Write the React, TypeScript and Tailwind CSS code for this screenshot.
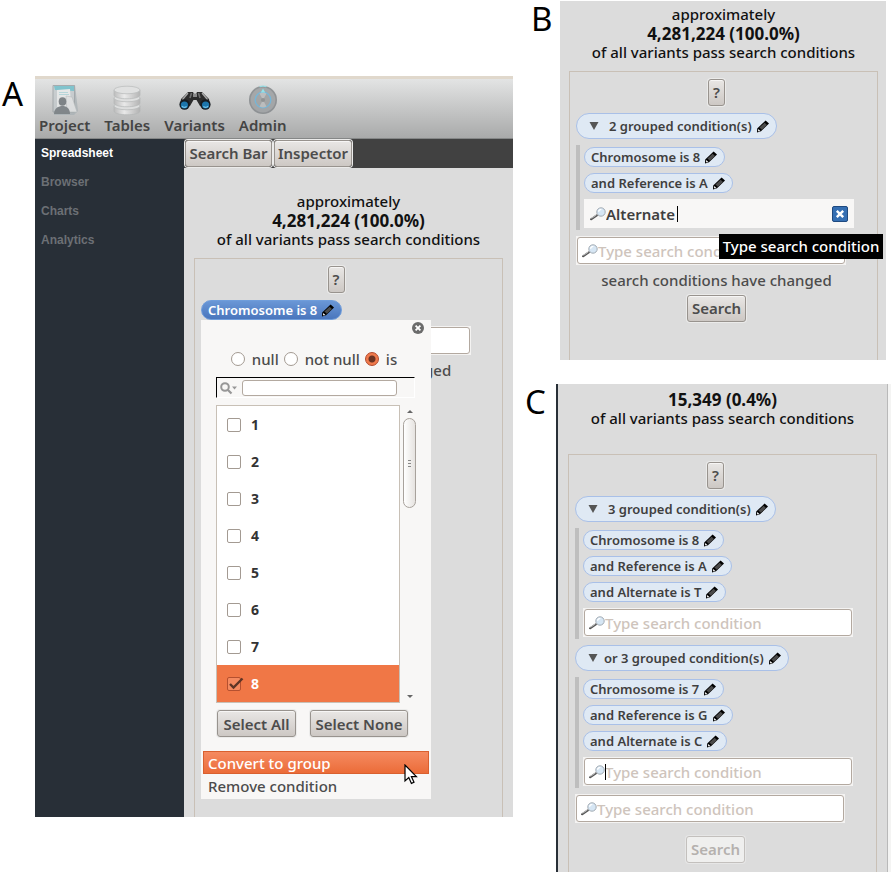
import { useId, type ReactNode } from "react";
import clsx from "clsx";

const SANS = "font-['Noto_Sans','Open_Sans',sans-serif]";

function Pencil() {
  return (
    <svg viewBox="0 0 14 13" className="h-[13px] w-[14px] shrink-0" aria-hidden="true">
      <path d="M9.6 0.6 L13 3.6 L5 11.2 L1 12.6 L1.2 8.4 Z" fill="#000" />
      <path d="M8.6 2.8 L11 5 L5.8 9.8 L3.4 7.6 Z" fill="#4a4a4a" />
      <path d="M2.2 9 L4.4 11 L2.6 11.4 L2 10.8 Z" fill="#f2f2f2" />
    </svg>
  );
}

function Magnifier() {
  return (
    <svg viewBox="0 0 16 14" className="h-[14px] w-[16px] shrink-0" aria-hidden="true">
      <path d="M1 12.3 L6.8 8.4" stroke="#555" strokeWidth="2" strokeLinecap="round" />
      <path d="M1.4 11.4 L6.4 8" stroke="#c9c9c9" strokeWidth="0.9" />
      <circle cx="11" cy="5" r="4.2" fill="#d6e6f4" stroke="#a3abb3" strokeWidth="1" />
      <path d="M8.6 4.8 A2.6 2.6 0 0 1 11.4 2.4" stroke="#fff" strokeWidth="1.4" fill="none" />
    </svg>
  );
}

function GtkButton({ children, className, disabled }: { children: ReactNode; className?: string; disabled?: boolean }) {
  return (
    <button
      type="button"
      disabled={disabled}
      className={clsx(
        "flex h-[27px] items-center justify-center rounded-[3px] border text-[15px] font-semibold whitespace-nowrap",
        disabled
          ? "border-[#c3c0bd] bg-[#efefee] text-[#b5b1ae] shadow-[0_0_0_1px_#e6e6e6]"
          : "border-[#98938e] bg-linear-to-b from-[#e9e7e5] to-[#cdc8c4] text-[#4c4c4c] shadow-[0_0_0_1px_#ebebea,inset_0_1px_0_#f7f6f5]",
        className,
      )}
    >
      {children}
    </button>
  );
}

function Chip({ children, selected }: { children: ReactNode; selected?: boolean }) {
  return (
    <button
      type="button"
      className={clsx(
        "flex h-5 items-center gap-1 rounded-full border pr-1.5 pl-1.5 text-[13px] leading-4 font-semibold whitespace-nowrap",
        selected
          ? "border-[#6f9ddb] bg-linear-to-b from-[#6a97d6] to-[#4a76bd] text-white"
          : "border-[#a9c0e8] bg-[#dfe9f4] text-[#3f3f3f]",
      )}
    >
      {children}
      <Pencil />
    </button>
  );
}

function GroupPill({ prefix, children }: { prefix?: string; children: ReactNode }) {
  return (
    <button
      type="button"
      className="flex h-[26px] items-center rounded-full border border-[#a9c0e8] bg-[#dfe9f4] pr-1.5 pl-3 text-[13px] leading-4 font-semibold whitespace-nowrap text-[#3f3f3f]"
    >
      <svg viewBox="0 0 10 8" className={clsx("h-2 w-[10px]", prefix ? "mr-[6px]" : "mr-[10px]")} aria-hidden="true">
        <path d="M0.5 0 H9.5 L5 8 Z" fill="#555" />
      </svg>
      <span className="mr-1">
        {prefix}
        {children}
      </span>
      <Pencil />
    </button>
  );
}

function ConditionField({ caret }: { caret?: boolean }) {
  const id = useId();
  return (
    <div className="w-full max-w-[270px] bg-[#f4f3f2] p-px">
      <div className="relative flex h-[27px] items-center rounded-[3px] border border-[#b3a9a0] bg-white pl-1">
        <label htmlFor={id} aria-label="Type search condition">
          <Magnifier />
        </label>
        {caret && <span className="absolute left-5 h-4 w-px bg-black" />}
        <input
          id={id}
          type="text"
          placeholder="Type search condition"
          className="w-full min-w-0 bg-transparent text-[15px] leading-5 font-medium outline-none placeholder:text-[#cec4bc]"
        />
      </div>
    </div>
  );
}

function Group({ children }: { children: ReactNode }) {
  return (
    <div className="flex w-[278px] flex-col items-start gap-1.5 border-l-4 border-[#bebebe] py-0.5 pl-1">{children}</div>
  );
}

function Summary({ approximate, count }: { approximate?: boolean; count: string }) {
  return (
    <div className="text-center text-[15px] leading-[19px] font-medium text-[#111]">
      {approximate && <p>approximately</p>}
      <p className="text-[17px] font-bold">{count}</p>
      <p className="whitespace-nowrap">of all variants pass search conditions</p>
    </div>
  );
}

function ProjectIcon() {
  return (
    <svg viewBox="0 0 32 32" className="size-8 opacity-75" aria-hidden="true">
      <path d="M4 1 H26 L29 27 L25 31 H5 Z" fill="#a9b1b5" />
      <path d="M4 1.5 H25.5 V28 H4 Z" fill="#c4cacd" stroke="#949b9f" />
      <path d="M5 2 H25 V7 L6 6 Z" fill="#63bcc9" />
      <path d="M8 6 L21 5 L22 22 L8 23 Z" fill="#ebeded" />
      <path d="M17 12 L23 13 L28 28 L18 28 Z" fill="#e3e5e6" stroke="#b0b5b7" strokeWidth="0.6" />
      <path d="M10 8.5 H19 M10 10.5 H20" stroke="#9ccfd6" strokeWidth="0.8" />
      <ellipse cx="13.5" cy="17.5" rx="3.8" ry="4.3" fill="#646b70" />
      <path d="M5 30 C5 24 10 22 13.5 22 C17 22 21 24 21 30 Z" fill="#6b7277" />
    </svg>
  );
}

function TablesIcon() {
  return (
    <svg viewBox="0 0 32 32" className="size-8 opacity-85" aria-hidden="true">
      <defs>
        <linearGradient id="drum" x1="0" x2="1">
          <stop offset="0" stopColor="#b9b9b9" />
          <stop offset="0.4" stopColor="#efefef" />
          <stop offset="1" stopColor="#b0b0b0" />
        </linearGradient>
      </defs>
      {[21, 13, 5].map((y) => (
        <g key={y} stroke="#b1b4b4" strokeWidth="0.7">
          <path d={`M3 ${y + 1} V${y + 6} C3 ${y + 11} 29 ${y + 11} 29 ${y + 6} V${y + 1} Z`} fill="url(#drum)" />
          <ellipse cx="16" cy={y + 1} rx="13" ry="3.8" fill="#e2e3e3" />
        </g>
      ))}
    </svg>
  );
}

function BinocularsIcon() {
  return (
    <svg viewBox="0 0 34 32" className="h-8 w-[34px]" aria-hidden="true">
      <path d="M10 8 H15 L16 10 H18 L19 8 H24 L31 15 L32 21 L22 22 L18.5 16 H15.5 L12 22 L2 21 L3 15 Z" fill="#2c2c2c" />
      <path d="M10 9 L4.5 15.5 M24 9 L29.5 15.5" stroke="#a9a9a9" strokeWidth="1.3" />
      <path d="M13.5 9 L12 14 M20.5 9 L22 14" stroke="#6f6f6f" strokeWidth="1.6" />
      <rect x="15" y="9.5" width="4" height="3.5" fill="#8b8b8b" />
      <circle cx="6.6" cy="20.5" r="5.2" fill="#171c21" />
      <circle cx="27.4" cy="20.5" r="5.2" fill="#171c21" />
      <circle cx="6.4" cy="21" r="3.6" fill="#1d76ac" />
      <circle cx="27.6" cy="21" r="3.6" fill="#1d76ac" />
      <path d="M4 22 A2.8 2.8 0 0 0 8.6 22.4 M25.4 22.4 A2.8 2.8 0 0 0 30 22" stroke="#6fc2ea" strokeWidth="1.2" fill="none" />
    </svg>
  );
}

function AdminIcon() {
  return (
    <svg viewBox="0 0 32 32" className="size-8 opacity-85" aria-hidden="true">
      <circle cx="16" cy="16" r="14" fill="#85898c" />
      <circle cx="16" cy="16" r="12.4" fill="#9da0a2" />
      <circle cx="16" cy="16" r="7.8" fill="#9c9e9f" stroke="#67b2da" strokeWidth="1.3" />
      <path d="M16 16 L12.5 9.6 A7 7 0 0 1 19.5 9.6 Z M16 16 L12.5 22.4 A7 7 0 0 0 19.5 22.4 Z" fill="#b9bbbc" />
      <path d="M16 4.5 L18.2 8.6 H13.8 Z" fill="#86e6ee" />
      <path d="M12.5 2.6 A14 14 0 0 1 19.5 2.6" stroke="#8edde6" strokeWidth="1.4" fill="none" />
      <circle cx="16" cy="16" r="2" fill="#85888a" />
    </svg>
  );
}

const TOOLS: { name: string; icon: ReactNode }[] = [
  { name: "Project", icon: <ProjectIcon /> },
  { name: "Tables", icon: <TablesIcon /> },
  { name: "Variants", icon: <BinocularsIcon /> },
  { name: "Admin", icon: <AdminIcon /> },
];

function Radio({ label, checked }: { label: string; checked?: boolean }) {
  return (
    <label className="flex items-center gap-[7px]">
      <input
        type="radio"
        name="operator"
        defaultChecked={checked}
        className="size-[14px] appearance-none rounded-full border border-[#a39a92] bg-white checked:border-[#b2482a] checked:bg-[radial-gradient(circle,#6b3322_0_3px,#f07a4c_4px)]"
      />
      {label}
    </label>
  );
}

function ValueRow({ value, checked }: { value: string; checked?: boolean }) {
  return (
    <label
      className={clsx(
        "relative flex h-[37px] items-center gap-[10px] pl-[10px] text-[14px] font-bold",
        checked ? "bg-[#f07746] text-white" : "text-[#333]",
      )}
    >
      <input
        type="checkbox"
        defaultChecked={checked}
        className="size-[14px] appearance-none rounded-[2px] border border-[#a39a92] bg-white checked:border-[#b5502f] checked:bg-[#f58a60]"
      />
      {value}
      {checked && (
        <svg viewBox="0 0 16 14" className="absolute left-[11px] h-[14px] w-4" aria-hidden="true">
          <path d="M2 7 L5.5 10.5 L14.5 1.5" fill="none" stroke="#5f3526" strokeWidth="2.4" />
        </svg>
      )}
    </label>
  );
}

function ConditionMenu() {
  return (
    <div className="absolute top-full left-0 z-10 h-[479px] w-[230px] bg-[#f8f7f6] text-[15px] leading-5 font-medium text-[#4c4c4c]">
      <div className="flex justify-end pt-px pr-1.5">
        <button type="button" aria-label="Close">
          <svg viewBox="0 0 14 14" className="block size-[14px]" aria-hidden="true">
            <circle cx="7" cy="7" r="6" fill="#6b6b6b" />
            <path d="M4.6 4.6 L9.4 9.4 M9.4 4.6 L4.6 9.4" stroke="#fff" strokeWidth="1.8" />
          </svg>
        </button>
      </div>
      <div className="mt-[14px] flex justify-center gap-[5px] pr-1 whitespace-nowrap">
        <Radio label="null" />
        <Radio label="not null" />
        <Radio label="is" checked />
      </div>
      <div className="mt-2 mr-4 ml-[15px] flex h-[21px] items-center border-t border-r border-b border-l border-t-black border-r-white border-b-white border-l-black pl-[3px]">
        <svg viewBox="0 0 18 14" className="h-[14px] w-[18px] shrink-0" aria-hidden="true">
          <circle cx="5" cy="6" r="3.8" fill="none" stroke="#979797" strokeWidth="2" />
          <path d="M8 9 L11.5 12.5" stroke="#979797" strokeWidth="2.2" />
          <path d="M12 5.5 H17 L14.5 8.5 Z" fill="#979797" />
        </svg>
        <input
          type="text"
          aria-label="Filter values"
          className="mr-[17px] ml-1 h-4 min-w-0 flex-1 rounded-[3px] border border-[#b3a9a0] bg-white px-1 text-xs outline-none"
        />
      </div>
      <div className="mt-[7px] ml-[15px] flex">
        <div className="w-[184px] border border-[#c8c0b6] bg-white">
          {["1", "2", "3", "4", "5", "6", "7"].map((v) => (
            <ValueRow key={v} value={v} />
          ))}
          <ValueRow value="8" checked />
        </div>
        <div className="ml-[3px] flex w-[13px] flex-col items-center py-[5px]" aria-hidden="true">
          <svg viewBox="0 0 6 3" className="h-[3px] w-1.5">
            <path d="M0 3 H6 L3 0 Z" fill="#666" />
          </svg>
          <div className="mt-[5px] flex h-[90px] w-full flex-col items-center justify-center gap-0.5 rounded-full border border-[#a8a29c] bg-linear-to-r from-white to-[#e6e3e0]">
            <span className="h-px w-[3px] bg-[#888]" />
            <span className="h-px w-[3px] bg-[#888]" />
            <span className="h-px w-[3px] bg-[#888]" />
          </div>
          <svg viewBox="0 0 6 3" className="mt-auto h-[3px] w-1.5">
            <path d="M0 0 H6 L3 3 Z" fill="#666" />
          </svg>
        </div>
      </div>
      <div className="mt-[7px] ml-4 flex gap-[14px]">
        <GtkButton className="w-[79px]">Select All</GtkButton>
        <GtkButton className="w-[98px]">Select None</GtkButton>
      </div>
      <ul className="mt-[14px] px-0.5">
        <li>
          <button
            type="button"
            className="relative flex h-[23px] w-full items-center border border-[#d9602f] bg-linear-to-b from-[#f58a60] to-[#eb6c38] pl-1 text-white"
          >
            Convert to group
            <svg viewBox="0 0 14 21" className="absolute top-3 right-2.5 h-[21px] w-[14px]" aria-hidden="true">
              <path d="M1 1 V17 L4.8 13.6 L7.4 19.4 L10 18.2 L7.4 12.6 H12.4 Z" fill="#fff" stroke="#000" strokeWidth="1.2" />
            </svg>
          </button>
        </li>
        <li>
          <button type="button" className="flex h-6 w-full items-center pl-[5px]">
            Remove condition
          </button>
        </li>
      </ul>
    </div>
  );
}

function FigureLabel({ children, className }: { children: string; className: string }) {
  return <h2 className={clsx("shrink-0 text-[33px] leading-9 text-black", className)}>{children}</h2>;
}

function PanelA() {
  return (
    <div className="flex min-h-[741px] min-w-0 flex-1 flex-col overflow-hidden bg-[#dcdcdc]">
      <header className="border-t-[3px] border-b border-t-[#e0d8cc] border-b-[#858787] bg-linear-to-b from-[#e3e4e4] to-[#a9aaaa]">
        <nav className="flex h-[59px] gap-[14px] pt-[5px] pl-1">
          {TOOLS.map((t) => (
            <button
              key={t.name}
              type="button"
              className="flex flex-col items-center text-[15px] leading-[18px] font-semibold text-[#444]"
            >
              {t.icon}
              {t.name}
            </button>
          ))}
        </nav>
      </header>
      <div className="flex flex-1">
        <nav className="w-[149px] shrink-0 bg-[#282f37] pl-1.5 font-['Liberation_Sans',sans-serif] text-[12px] leading-[29px] font-bold text-[#6c7075]">
          {["Spreadsheet", "Browser", "Charts", "Analytics"].map((n) => (
            <a key={n} href="#view" className={clsx("block", n === "Spreadsheet" && "text-white")}>
              {n}
            </a>
          ))}
        </nav>
        <div className="flex min-w-0 flex-1 flex-col">
          <div className="flex h-[29px] items-center gap-0.5 bg-[#414141] pl-px">
            <GtkButton className="w-[87px]">Search Bar</GtkButton>
            <GtkButton className="w-[78px]">Inspector</GtkButton>
          </div>
          <div className="flex flex-1 flex-col pt-6 pr-[10px] pl-[10px]">
            <Summary approximate count="4,281,224 (100.0%)" />
            <div className="mt-[9px] flex-1 border border-b-0 border-[#c9c0b6] pt-[7px] pr-[31px] pl-1.5">
              <div className="flex justify-center">
                <GtkButton className="w-[17px]">?</GtkButton>
              </div>
              <div className="relative mt-[7px]">
                <div className="flex">
                  <Chip selected>Chromosome is 8</Chip>
                </div>
                <ConditionMenu />
              </div>
              <div className="mt-1.5">
                <ConditionField />
              </div>
              <p className="mt-[5px] text-center text-[15px] leading-5 font-medium whitespace-nowrap text-[#4c4c4c]">
                search conditions have changed
              </p>
            </div>
          </div>
        </div>
      </div>
    </div>
  );
}

function PanelB() {
  return (
    <div className="mr-[5px] flex min-h-[359px] min-w-0 flex-1 flex-col bg-[#dcdcdc] pt-1 pr-2 pl-[9px]">
      <Summary approximate count="4,281,224 (100.0%)" />
      <div className="mt-[9px] flex-1 border border-b-0 border-[#c9c0b6] pt-[7px] pr-5 pl-1.5">
        <div className="flex justify-center">
          <GtkButton className="w-[17px]">?</GtkButton>
        </div>
        <div className="mt-[7px] flex flex-col items-start gap-1.5">
          <GroupPill>2 grouped condition(s)</GroupPill>
          <Group>
            <Chip>Chromosome is 8</Chip>
            <Chip>and Reference is A</Chip>
            <div className="flex h-[29px] w-full max-w-[270px] items-center bg-[#f8f7f6] pr-1.5 pl-1.5">
              <label htmlFor="condition-entry" aria-label="Type search condition">
                <Magnifier />
              </label>
              <span className="relative min-w-0 flex-1">
                <input
                  id="condition-entry"
                  type="text"
                  defaultValue="Alternate"
                  className="block w-full bg-transparent text-[15px] leading-5 font-semibold text-[#3f3f3f] outline-none"
                />
                <span className="absolute top-0.5 left-[71px] h-4 w-px bg-black" />
              </span>
              <button type="button" aria-label="Clear" className="shrink-0">
                <svg viewBox="0 0 16 16" className="block size-4" aria-hidden="true">
                  <rect x="0.5" y="0.5" width="15" height="15" rx="1.5" fill="#356fb3" stroke="#1f4a80" />
                  <path d="M4.8 4.8 L11.2 11.2 M11.2 4.8 L4.8 11.2" stroke="#fff" strokeWidth="2.4" />
                </svg>
              </button>
            </div>
          </Group>
          <div className="relative w-full">
            <ConditionField />
            <div
              role="tooltip"
              className="absolute -top-0.5 left-[143px] flex h-[25px] w-[164px] items-center justify-center bg-black text-[15px] font-medium whitespace-nowrap text-white"
            >
              Type search condition
            </div>
          </div>
        </div>
        <p className="mt-[5px] text-center text-[15px] leading-5 font-medium whitespace-nowrap text-[#4c4c4c]">
          search conditions have changed
        </p>
        <div className="mt-[5px] flex justify-center">
          <GtkButton className="w-[59px]">Search</GtkButton>
        </div>
      </div>
    </div>
  );
}

function PanelC() {
  return (
    <div className="flex min-w-0 flex-1 border-r-[3px] border-l-2 border-r-[#f4f4f3] border-l-[#282f37]">
      <div className="flex min-w-0 flex-1 flex-col border-r border-[#b9b9b9] bg-[#dcdcdc] px-[10px] pt-1.5">
        <Summary count="15,349 (0.4%)" />
        <div className="mt-[26px] flex-1 border border-b-0 border-[#c9c0b6] pt-[7px] pr-5 pl-1.5">
          <div className="flex justify-center">
            <GtkButton className="w-[17px]">?</GtkButton>
          </div>
          <div className="mt-[7px] flex flex-col items-start gap-1.5">
            <GroupPill>3 grouped condition(s)</GroupPill>
            <Group>
              <Chip>Chromosome is 8</Chip>
              <Chip>and Reference is A</Chip>
              <Chip>and Alternate is T</Chip>
              <ConditionField />
            </Group>
            <GroupPill prefix="or ">3 grouped condition(s)</GroupPill>
            <Group>
              <Chip>Chromosome is 7</Chip>
              <Chip>and Reference is G</Chip>
              <Chip>and Alternate is C</Chip>
              <ConditionField caret />
            </Group>
            <ConditionField />
          </div>
          <div className="mt-[13px] flex justify-center">
            <GtkButton disabled className="w-[59px]">
              Search
            </GtkButton>
          </div>
        </div>
      </div>
    </div>
  );
}

export default function App() {
  return (
    <main className={clsx("grid min-h-screen grid-cols-[minmax(0,513fr)_minmax(0,378fr)] bg-white", SANS)}>
      <section className="flex items-start pt-[76px]">
        <FigureLabel className="w-[35px] pl-0.5">A</FigureLabel>
        <PanelA />
      </section>
      <div className="flex flex-col gap-6 pt-px">
        <section className="flex">
          <FigureLabel className="w-[47px] pl-[18px]">B</FigureLabel>
          <PanelB />
        </section>
        <section className="flex flex-1">
          <FigureLabel className="w-[43px] pl-3">C</FigureLabel>
          <PanelC />
        </section>
      </div>
    </main>
  );
}
